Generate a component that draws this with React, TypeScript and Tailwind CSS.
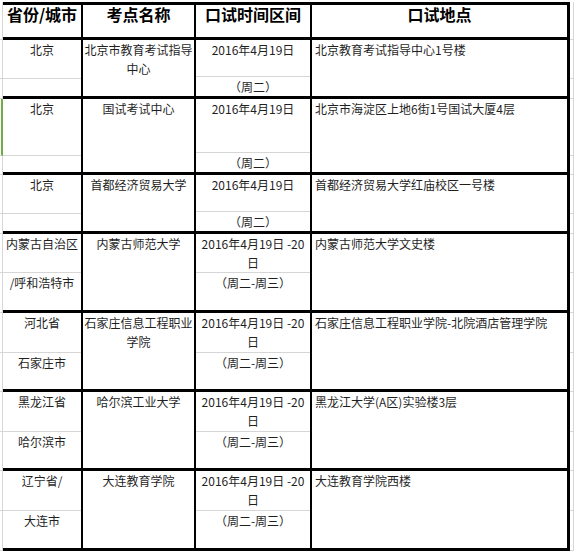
import React from "react";

type Group = {
  a: number;
  b: number;
  prov: [string, string];
  name: string[];
  date: string[];
  week: string;
  place: string;
  mark?: boolean;
};

const oneDay = ["2016年4月19日"];
const twoDays = ["2016年4月19日 -20", "日"];

const groups: Group[] = [
  { a: 38, b: 17, prov: ["北京", ""], name: ["北京市教育考试指导", "中心"], date: oneDay, week: "（周二）", place: "北京教育考试指导中心1号楼" },
  { a: 56, b: 16, prov: ["北京", ""], name: ["国试考试中心"], date: oneDay, week: "（周二）", place: "北京市海淀区上地6街1号国试大厦4层", mark: true },
  { a: 38, b: 17, prov: ["北京", ""], name: ["首都经济贸易大学"], date: oneDay, week: "（周二）", place: "首都经济贸易大学红庙校区一号楼" },
  { a: 38, b: 37, prov: ["内蒙古自治区", "/呼和浩特市"], name: ["内蒙古师范大学"], date: twoDays, week: "（周二-周三）", place: "内蒙古师范大学文史楼" },
  { a: 39, b: 36, prov: ["河北省", "石家庄市"], name: ["石家庄信息工程职业", "学院"], date: twoDays, week: "（周二-周三）", place: "石家庄信息工程职业学院-北院酒店管理学院" },
  { a: 39, b: 36, prov: ["黑龙江省", "哈尔滨市"], name: ["哈尔滨工业大学"], date: twoDays, week: "（周二-周三）", place: "黑龙江大学(A区)实验楼3层" },
  { a: 39, b: 37, prov: ["辽宁省/", "大连市"], name: ["大连教育学院"], date: twoDays, week: "（周二-周三）", place: "大连教育学院西楼" },
];

function Lines({ items }: { items: string[] }) {
  return (
    <>
      {items.map((t, i) => (
        <div key={i} className="whitespace-nowrap">{t}</div>
      ))}
    </>
  );
}

function Margin({ a, b, mark, right }: { a: number; b: number; mark?: boolean; right?: boolean }) {
  const line = right ? "border-r border-[#d6d6d6]" : mark ? "border-r-2 border-[#70ad47]" : "border-r border-[#d6d6d6]";
  return (
    <div className={right ? "w-[4px] flex flex-col" : "w-[3px] flex flex-col"}>
      <div className={`${line} border-b border-b-[#d6d6d6]`} style={{ height: a + 1 }} />
      <div className="border-r border-[#d6d6d6] border-b border-b-[#d6d6d6]" style={{ height: b + 3 }} />
    </div>
  );
}

export default function App() {
  return (
    <div className="w-[575px] h-[552px] overflow-hidden bg-white pt-[2px] text-[12px] leading-[19px] text-[#1f1f1f] font-['Noto_Sans_CJK_SC',sans-serif]">
      {/* header */}
      <div className="flex">
        <div className="w-[3px] h-[38px] border-r border-b border-[#d6d6d6]" />
        <div className="w-[567px] h-[38px] flex border-y-[3px] border-r-[3px] border-black text-[16px] leading-[18px] font-bold text-black">
          <div className="w-[80px] border-r-2 border-black text-center whitespace-nowrap">省份/城市</div>
          <div className="w-[113px] border-r-2 border-black text-center">考点名称</div>
          <div className="w-[116px] border-r-2 border-black text-center">口试时间区间</div>
          <div className="flex-1 text-center">口试地点</div>
        </div>
        <div className="w-[4px] h-[38px] border-r border-b border-[#d6d6d6]" />
      </div>

      {groups.map((g, i) => (
        <div key={i} className="flex">
          <Margin a={g.a} b={g.b} mark={g.mark} />
          <div
            className="w-[567px] flex border-b-[3px] border-r-[3px] border-black"
            style={{ height: g.a + g.b + 4 }}
          >
            <div className="w-[80px] border-r-2 border-black flex flex-col text-center">
              <div className="border-b border-[#d6d6d6] whitespace-nowrap" style={{ height: g.a + 1 }}>{g.prov[0]}</div>
              <div className="flex-1 whitespace-nowrap">{g.prov[1]}</div>
            </div>
            <div className="w-[113px] border-r-2 border-black text-center">
              <Lines items={g.name} />
            </div>
            <div className="w-[116px] border-r-2 border-black flex flex-col text-center">
              <div className="border-b border-[#d6d6d6]" style={{ height: g.a + 1 }}>
                <Lines items={g.date} />
              </div>
              <div className="flex-1 whitespace-nowrap">{g.week}</div>
            </div>
            <div className="flex-1 pl-[3px] whitespace-nowrap">{g.place}</div>
          </div>
          <Margin a={g.a} b={g.b} right />
        </div>
      ))}
    </div>
  );
}
